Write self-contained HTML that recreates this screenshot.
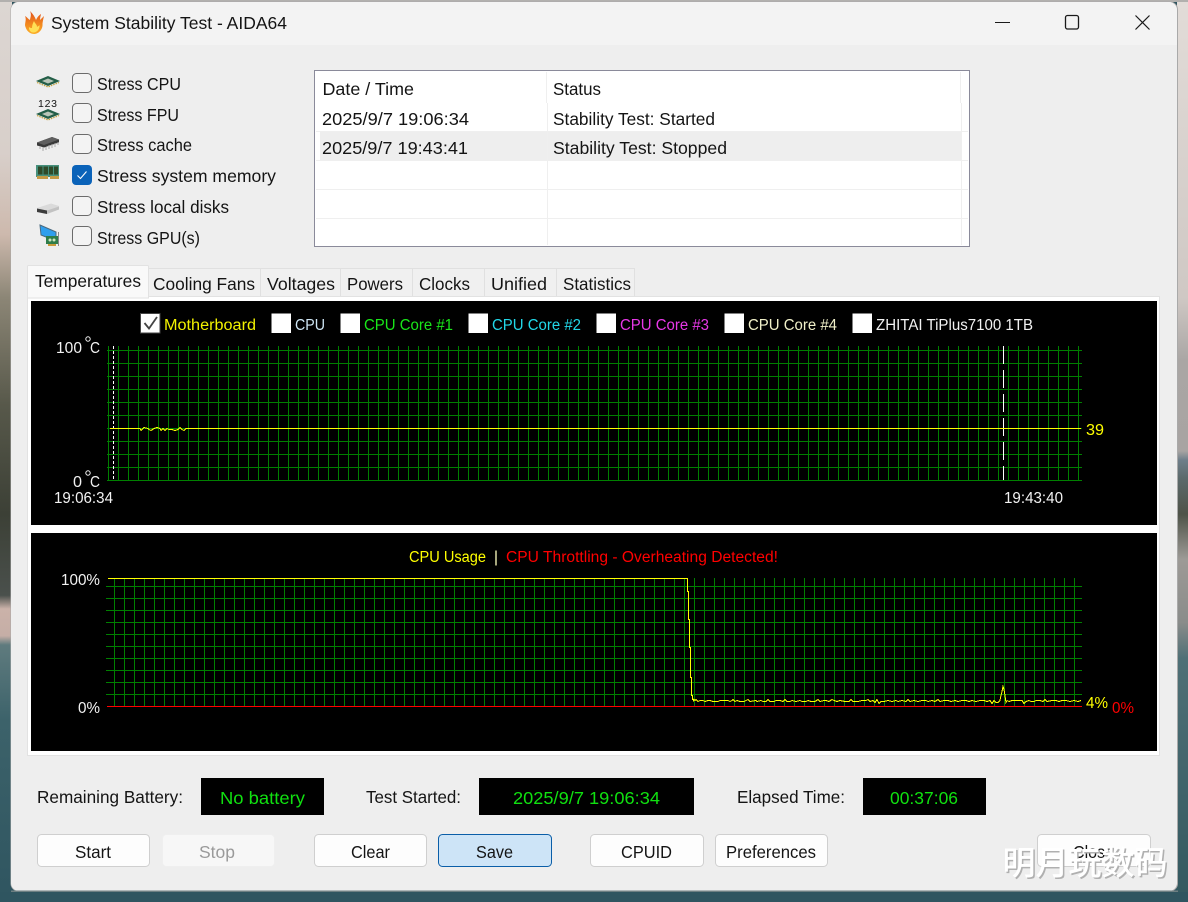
<!DOCTYPE html>
<html lang="en">
<head>
<meta charset="utf-8">
<title>System Stability Test - AIDA64</title>
<style>
html,body{margin:0;padding:0;width:1188px;height:902px;overflow:hidden;background:#2f5560}
svg{display:block}
text{font-family:"Liberation Sans","Noto Sans CJK SC",sans-serif;font-size:17.5px;fill:#141414;white-space:pre}
.c text,text.c{font-size:15.5px}
.wm{font-family:"Liberation Sans","Noto Sans CJK SC",sans-serif;font-size:33px;font-weight:500}
</style>
</head>
<body>
<svg width="1188" height="902" viewBox="0 0 1188 902" xmlns="http://www.w3.org/2000/svg">
<defs>
<linearGradient id="wl" x1="0" y1="0" x2="0" y2="1">
<stop offset="0" stop-color="#dcd6d2"/><stop offset=".17" stop-color="#d8cfca"/><stop offset=".26" stop-color="#cdb9ad"/><stop offset=".33" stop-color="#8c8676"/><stop offset=".45" stop-color="#57584a"/><stop offset=".57" stop-color="#3c4036"/><stop offset=".66" stop-color="#4a504c"/><stop offset=".675" stop-color="#cbb2a9"/><stop offset=".705" stop-color="#c5aea6"/><stop offset=".715" stop-color="#5f7b7e"/><stop offset=".8" stop-color="#3c626a"/><stop offset="1" stop-color="#2f5560"/>
</linearGradient>
<linearGradient id="wr" x1="0" y1="0" x2="0" y2="1">
<stop offset="0" stop-color="#e2dcd8"/><stop offset=".33" stop-color="#cfc8c4"/><stop offset=".4" stop-color="#aaa6a4"/><stop offset=".5" stop-color="#a8a4a2"/><stop offset=".51" stop-color="#6f7f8a"/><stop offset=".53" stop-color="#5c6a6c"/><stop offset=".57" stop-color="#4e5348"/><stop offset=".62" stop-color="#9d9a96"/><stop offset=".69" stop-color="#8a8c8a"/><stop offset=".73" stop-color="#4f7076"/><stop offset="1" stop-color="#33585f"/>
</linearGradient>
<pattern id="gv1" patternUnits="userSpaceOnUse" x="108" y="0" width="10" height="10"><rect width="1" height="10" fill="#008000"/></pattern>
<pattern id="gh1" patternUnits="userSpaceOnUse" x="0" y="350" width="10" height="13"><rect width="10" height="1" fill="#008000"/></pattern>
<pattern id="gv2" patternUnits="userSpaceOnUse" x="114" y="0" width="10" height="10"><rect width="1" height="10" fill="#008000"/></pattern>
<pattern id="gh2" patternUnits="userSpaceOnUse" x="0" y="586" width="10" height="12"><rect width="10" height="1" fill="#008000"/></pattern>
<linearGradient id="fl" x1="0" y1="0" x2="0" y2="1"><stop offset="0" stop-color="#e2521c"/><stop offset=".6" stop-color="#f28a1e"/><stop offset="1" stop-color="#fbb02a"/></linearGradient>
</defs>

<!-- wallpaper -->
<rect width="1188" height="902" fill="#2f5560"/>
<rect x="0" y="0" width="12" height="902" fill="url(#wl)"/>
<rect x="1177" y="0" width="11" height="902" fill="url(#wr)"/>
<rect x="0" y="892" width="1188" height="10" fill="#2f5560"/>
<rect x="0" y="0" width="1188" height="2" fill="#b2b0ae"/>

<!-- window -->
<rect x="10.500" y="1.500" width="1167.500" height="890" rx="8" fill="#a9a9a9"/>
<rect x="11" y="2" width="1166" height="889" rx="8" fill="#eeeeee"/>
<path d="M11 45V10a8 8 0 0 1 8-8H1169a8 8 0 0 1 8 8V45Z" fill="#f3f3f3"/>
<rect x="11" y="890.500" width="1167" height="1.500" fill="#6d7f82"/>

<!-- titlebar -->
<path d="M30 11C32 15 30 18 30 20 28 19 27 17 25 16 27 20 24 24 25.500 27 27 32 31 34 34 34 39 34 43 29 42.500 24 42.500 23 43 20 44 16 42 18 41 19 40 20 40 17 41 15 41 14 38 16 37 18 36 20 35 17 33 14 30 11Z" fill="url(#fl)"/>
<path d="M34 21C35 24 37 24 37 27 38 26 39 26 39.500 25 40 29 37 32.500 33.500 32.500 30.500 32.500 28.500 30 29 27 30 28 31 28 32 28 32 25 33 23 34 21Z" fill="#ffdf55"/>
<text x="51" y="29" textLength="236" lengthAdjust="spacingAndGlyphs" font-size="18">System Stability Test - AIDA64</text>
<rect x="995" y="22" width="15" height="1" fill="#1a1a1a"/>
<rect x="1065.500" y="15.500" width="13" height="13.500" rx="2" fill="none" stroke="#1a1a1a" stroke-width="1.300"/>
<path d="M1135.500 15.500 1149.500 29.500M1149.500 15.500 1135.500 29.500" stroke="#1a1a1a" stroke-width="1.200" fill="none"/>

<!-- stress icons -->
<g>
<path d="M36 81 48 76 60 81 48 86Z" fill="#245f48"/><path d="M42 81 48 78.500 54 81 48 83.500Z" fill="#b9c6b8"/><path d="M37 82.500 48 87 59 82.500" fill="none" stroke="#c2a03a" stroke-width="1.200" stroke-dasharray="1.500 1"/>
<text x="38" y="107" textLength="19" lengthAdjust="spacing" style="font-size:10.500px">123</text>
<path d="M36 114 48 109 60 114 48 119Z" fill="#245f48"/><path d="M42 114 48 111.500 54 114 48 116.500Z" fill="#b9c6b8"/><path d="M37 115.500 48 120 59 115.500" fill="none" stroke="#c2a03a" stroke-width="1.200" stroke-dasharray="1.500 1"/>
<path d="M37 142.500 52 137 59 139.500 59 142.500 44 147.500 37 145.500Z" fill="#3a3a3a"/><path d="M37 142.500 52 137 59 139.500 44 145Z" fill="#5f5f5f"/><path d="M40 146V149M43 147V151M46 147V150M49 145V149M52 144V148M55 143V147M58 142V145" stroke="#a8a8a8" stroke-width="1"/>
<rect x="36" y="165" width="23" height="12" fill="#46907c"/><rect x="38" y="166.500" width="4.500" height="8" fill="#2f4a2a"/><rect x="43.500" y="166.500" width="4.500" height="8" fill="#2f4a2a"/><rect x="49" y="166.500" width="4" height="8" fill="#2f4a2a"/><rect x="54" y="166.500" width="4" height="8" fill="#2f4a2a"/><rect x="37" y="176" width="11" height="3" fill="#c49a45"/><rect x="50" y="176" width="9" height="3" fill="#c49a45"/>
<path d="M37 208 51 203.500 59 206 59 209.500 46 214 37 212Z" fill="#dadada"/><path d="M37 208.500 47 210.500 47 214 37 212Z" fill="#3c3c3c"/><path d="M47 210.500 59 206.500 59 209.500 47 214Z" fill="#c2c2c2"/>
<path d="M40 225 56 232 56 241 41 235Z" fill="#2f9fee" stroke="#4a6a80" stroke-width="1"/>
<rect x="46" y="236" width="12" height="8" fill="#2f7d4a"/><circle cx="50" cy="240" r="1.500" fill="#cfe6c0"/><circle cx="54" cy="240" r="1.500" fill="#cfe6c0"/><rect x="48" y="244" width="8" height="2" fill="#c89a3a"/><rect x="58" y="232" width="1" height="14" fill="#888"/>
</g>

<!-- stress checkboxes -->
<g fill="#f3f3f3" stroke="#6b6b6b" stroke-width="1">
<rect x="72.500" y="73.500" width="19" height="19" rx="4"/>
<rect x="72.500" y="103.500" width="19" height="19" rx="4"/>
<rect x="72.500" y="134.500" width="19" height="19" rx="4"/>
<rect x="72.500" y="196.500" width="19" height="19" rx="4"/>
<rect x="72.500" y="226.500" width="19" height="19" rx="4"/>
</g>
<rect x="72" y="165" width="20" height="20" rx="4" fill="#0b63b9"/>
<path d="M77.500 175.500 80.500 178.500 86.500 171.500" fill="none" stroke="#fff" stroke-width="1.100"/>
<text x="97" y="90" textLength="84" lengthAdjust="spacingAndGlyphs">Stress CPU</text>
<text x="97" y="121" textLength="82" lengthAdjust="spacingAndGlyphs">Stress FPU</text>
<text x="97" y="151" textLength="95" lengthAdjust="spacingAndGlyphs">Stress cache</text>
<text x="97" y="182" textLength="179" lengthAdjust="spacingAndGlyphs">Stress system memory</text>
<text x="97" y="213" textLength="132" lengthAdjust="spacingAndGlyphs">Stress local disks</text>
<text x="97" y="244" textLength="103" lengthAdjust="spacingAndGlyphs">Stress GPU(s)</text>

<!-- log table -->
<rect x="314.500" y="70.500" width="655" height="176" fill="#fff" stroke="#8a8a9a" stroke-width="1"/>
<rect x="320" y="131" width="641" height="30" fill="#eeeeee"/>
<g fill="#efefef">
<rect x="546" y="72" width="1" height="31"/><rect x="960" y="72" width="1" height="31"/>
<rect x="547" y="103" width="1" height="142"/><rect x="961" y="103" width="1" height="142"/>
<rect x="316" y="131" width="652" height="1"/><rect x="316" y="160" width="652" height="1"/>
<rect x="316" y="189" width="652" height="1"/><rect x="316" y="218" width="652" height="1"/>
</g>
<text x="322.500" y="95" textLength="91.500" lengthAdjust="spacingAndGlyphs">Date / Time</text>
<text x="553" y="95" textLength="48" lengthAdjust="spacingAndGlyphs">Status</text>
<text x="322" y="125" textLength="147" lengthAdjust="spacingAndGlyphs">2025/9/7 19:06:34</text>
<text x="553" y="125" textLength="162" lengthAdjust="spacingAndGlyphs">Stability Test: Started</text>
<text x="322" y="154" textLength="146" lengthAdjust="spacingAndGlyphs">2025/9/7 19:43:41</text>
<text x="553" y="154" textLength="174" lengthAdjust="spacingAndGlyphs">Stability Test: Stopped</text>

<!-- tabs -->
<g fill="#f0f0f0" stroke="#e0e0e0" stroke-width="1">
<rect x="148.500" y="268.500" width="112" height="30"/>
<rect x="260.500" y="268.500" width="80" height="30"/>
<rect x="340.500" y="268.500" width="72" height="30"/>
<rect x="412.500" y="268.500" width="72" height="30"/>
<rect x="484.500" y="268.500" width="72" height="30"/>
<rect x="556.500" y="268.500" width="78" height="30"/>
</g>
<rect x="27.500" y="296.500" width="1132" height="459" fill="#ffffff" stroke="#e2e2e2" stroke-width="1"/>
<path d="M27.500 298V266.500a1 1 0 0 1 1-1H147.500a1 1 0 0 1 1 1V298Z" fill="#f9f9f9" stroke="#e2e2e2" stroke-width="1"/>
<text x="35" y="287" textLength="106" lengthAdjust="spacingAndGlyphs">Temperatures</text>
<text x="153" y="290" textLength="102" lengthAdjust="spacingAndGlyphs">Cooling Fans</text>
<text x="267" y="290" textLength="68" lengthAdjust="spacingAndGlyphs">Voltages</text>
<text x="347" y="290" textLength="56" lengthAdjust="spacingAndGlyphs">Powers</text>
<text x="419" y="290" textLength="51" lengthAdjust="spacingAndGlyphs">Clocks</text>
<text x="491" y="290" textLength="56" lengthAdjust="spacingAndGlyphs">Unified</text>
<text x="563" y="290" textLength="68" lengthAdjust="spacingAndGlyphs">Statistics</text>

<!-- temperature chart -->
<rect x="31" y="301" width="1126" height="224" fill="#000"/>
<rect x="108" y="346" width="971" height="135" fill="url(#gv1)"/>
<rect x="107" y="350" width="975" height="131" fill="url(#gh1)"/>
<g stroke="#fff" stroke-width="1" fill="none" shape-rendering="crispEdges">
<path d="M113.500 346V480" stroke-dasharray="3 2"/>
<path d="M1003.500 346V480" stroke-dasharray="18 6"/>
</g>
<polyline shape-rendering="crispEdges" fill="none" stroke="#ffff00" stroke-width="1" points="110,428.500 140,428.500 141,430.500 142,429.500 144,427.500 148,428.500 149,429.500 151,430.500 154,428.500 157,427.500 160,428.500 161,430.500 163,428.500 165,430.500 167,428.500 169,429.500 172,429.500 175,430.500 178,429.500 180,427.500 182,429.500 184,430.500 186,428.500 188,428.500 1081,428.500"/>

<g fill="#fff" stroke="#444" stroke-width="1">
<rect x="140.500" y="313.500" width="19.500" height="19.500"/>
<rect x="271.500" y="313.500" width="19.500" height="19.500" stroke="none"/>
<rect x="340.500" y="313.500" width="19.500" height="19.500" stroke="none"/>
<rect x="468.500" y="313.500" width="19.500" height="19.500" stroke="none"/>
<rect x="596.500" y="313.500" width="19.500" height="19.500" stroke="none"/>
<rect x="724.500" y="313.500" width="19.500" height="19.500" stroke="none"/>
<rect x="852.500" y="313.500" width="19.500" height="19.500" stroke="none"/>
</g>
<path d="M144.500 323 149 328.500 157 317" fill="none" stroke="#444" stroke-width="1.800"/>
<g class="c">
<text x="164" y="330" textLength="92" lengthAdjust="spacingAndGlyphs" style="fill:#f2f200">Motherboard</text>
<text x="295" y="330" textLength="30" lengthAdjust="spacingAndGlyphs" style="fill:#cfe6f5">CPU</text>
<text x="364" y="330" textLength="89" lengthAdjust="spacingAndGlyphs" style="fill:#19e619">CPU Core #1</text>
<text x="492" y="330" textLength="89" lengthAdjust="spacingAndGlyphs" style="fill:#22d8e8">CPU Core #2</text>
<text x="620" y="330" textLength="89" lengthAdjust="spacingAndGlyphs" style="fill:#e838e8">CPU Core #3</text>
<text x="748" y="330" textLength="89" lengthAdjust="spacingAndGlyphs" style="fill:#f0f0c8">CPU Core #4</text>
<text x="876" y="330" textLength="157" lengthAdjust="spacingAndGlyphs" style="fill:#f2f2f2">ZHITAI TiPlus7100 1TB</text>
<text x="56" y="353" textLength="26" lengthAdjust="spacingAndGlyphs" style="fill:#f2f2f2">100</text>
<text x="90" y="353" textLength="10" lengthAdjust="spacingAndGlyphs" style="fill:#f2f2f2">C</text>
<text x="73" y="487" textLength="9" lengthAdjust="spacingAndGlyphs" style="fill:#f2f2f2">0</text>
<text x="90" y="487" textLength="10" lengthAdjust="spacingAndGlyphs" style="fill:#f2f2f2">C</text>
<text x="54" y="503" textLength="59" lengthAdjust="spacingAndGlyphs" style="fill:#f2f2f2">19:06:34</text>
<text x="1004" y="503" textLength="59" lengthAdjust="spacingAndGlyphs" style="fill:#f2f2f2">19:43:40</text>
<text x="1086" y="435" textLength="18" lengthAdjust="spacingAndGlyphs" style="fill:#ffff00">39</text>
</g>
<circle cx="88" cy="339" r="2.200" fill="none" stroke="#f2f2f2" stroke-width="1"/>
<circle cx="88" cy="473" r="2.200" fill="none" stroke="#f2f2f2" stroke-width="1"/>

<!-- CPU usage chart -->
<rect x="31" y="533" width="1126" height="218" fill="#000"/>
<rect x="114" y="578" width="961" height="128" fill="url(#gv2)"/>
<rect x="106" y="586" width="976" height="120" fill="url(#gh2)"/>
<rect x="107" y="706" width="975" height="1" fill="#ff0000"/>
<polyline shape-rendering="crispEdges" fill="none" stroke="#ffff00" stroke-width="1" points="108,578.500 687.500,578.500 687.500,591.500 688.500,591.500 688.500,619.500 689.500,619.500 689.500,647.500 690.500,647.500 690.500,677.500 691.500,677.500 691.500,695.500 692.500,695.500 692.500,699.500 693.500,699.500 693.500,701.500 694,699.500 695,700.500 696,699.500 698,701.500 700,700.500 703,700.500 705,701.500 708,700.500 710,700.500 713,701.500 718,701.500 720,700.500 728,700.500 730,701.500 732,700.500 733,699.500 735,701.500 737,700.500 740,701.500 744,701.500 746,700.500 748,699.500 750,701.500 756,700.500 757,701.500 761,700.500 763,701.500 766,701.500 768,699.500 770,701.500 774,701.500 776,700.500 780,700.500 783,701.500 785,699.500 787,701.500 790,701.500 792,700.500 796,701.500 800,700.500 802,701.500 806,701.500 808,700.500 811,701.500 815,701.500 818,699.500 820,701.500 824,700.500 826,700.500 829,701.500 832,699.500 834,700.500 837,701.500 840,700.500 845,701.500 849,701.500 851,699.500 853,701.500 858,701.500 862,700.500 866,700.500 868,699.500 870,701.500 873,700.500 875,702.500 877,699.500 879,703.500 881,701.500 884,701.500 888,700.500 892,701.500 896,700.500 898,701.500 902,700.500 906,701.500 908,699.500 910,701.500 914,700.500 918,701.500 922,700.500 926,700.500 928,701.500 932,700.500 935,701.500 938,699.500 940,701.500 944,700.500 948,700.500 951,701.500 955,700.500 958,701.500 962,700.500 966,700.500 969,701.500 972,700.500 976,701.500 980,700.500 984,700.500 987,701.500 990,700.500 992,703.500 994,700.500 996,702.500 998,702.500 1000,700.500 1001,695.500 1002,691.500 1003,686.500 1004,689.500 1005,695.500 1006,702.500 1007,700.500 1009,701.500 1012,700.500 1022,700.500 1024,703.500 1026,701.500 1029,700.500 1031,701.500 1034,701.500 1036,700.500 1040,700.500 1043,701.500 1045,699.500 1047,701.500 1052,700.500 1056,700.500 1059,701.500 1062,700.500 1066,700.500 1070,701.500 1074,700.500 1078,701.500 1081,700.500"/>
<g class="c">
<text x="409" y="562" textLength="77" lengthAdjust="spacingAndGlyphs" style="fill:#ffff00">CPU Usage</text>
<text x="494" y="562" textLength="4" lengthAdjust="spacingAndGlyphs" style="fill:#ffffc0">|</text>
<text x="506" y="562" textLength="272" lengthAdjust="spacingAndGlyphs" style="fill:#ff0000">CPU Throttling - Overheating Detected!</text>
<text x="61" y="585" textLength="39" lengthAdjust="spacingAndGlyphs" style="fill:#f2f2f2">100%</text>
<text x="78" y="713" textLength="22" lengthAdjust="spacingAndGlyphs" style="fill:#f2f2f2">0%</text>
<text x="1086" y="708" textLength="22" lengthAdjust="spacingAndGlyphs" style="fill:#ffff00">4%</text>
<text x="1112" y="713" textLength="22" lengthAdjust="spacingAndGlyphs" style="fill:#ff0000">0%</text>
</g>

<!-- status row -->
<text x="37" y="803" textLength="146" lengthAdjust="spacingAndGlyphs">Remaining Battery:</text>
<rect x="201" y="778" width="123" height="37" fill="#000"/>
<text x="220" y="804" textLength="85" lengthAdjust="spacingAndGlyphs" style="fill:#10e010">No battery</text>
<text x="366" y="803" textLength="95" lengthAdjust="spacingAndGlyphs">Test Started:</text>
<rect x="479" y="778" width="215" height="37" fill="#000"/>
<text x="513" y="804" textLength="147" lengthAdjust="spacingAndGlyphs" style="fill:#10e010">2025/9/7 19:06:34</text>
<text x="737" y="803" textLength="108" lengthAdjust="spacingAndGlyphs">Elapsed Time:</text>
<rect x="863" y="778" width="123" height="37" fill="#000"/>
<text x="890" y="804" textLength="68" lengthAdjust="spacingAndGlyphs" style="fill:#10e010">00:37:06</text>

<!-- buttons -->
<g fill="#fdfdfd" stroke="#cfcfcf" stroke-width="1">
<rect x="37.500" y="834.500" width="112" height="32" rx="4"/>
<rect x="314.500" y="834.500" width="112" height="32" rx="4"/>
<rect x="590.500" y="834.500" width="113" height="32" rx="4"/>
<rect x="715.500" y="834.500" width="112" height="32" rx="4"/>
<rect x="1037.500" y="834.500" width="113" height="32" rx="4"/>
</g>
<rect x="162.500" y="834.500" width="112" height="32" rx="4" fill="#f7f7f7" stroke="#efefef"/>
<rect x="438.500" y="834.500" width="113" height="32" rx="4" fill="#cde4f7" stroke="#0a5ea8"/>
<text x="75" y="858" textLength="36" lengthAdjust="spacingAndGlyphs">Start</text>
<text x="199" y="858" textLength="36" lengthAdjust="spacingAndGlyphs" style="fill:#9a9a9a">Stop</text>
<text x="351" y="858" textLength="39" lengthAdjust="spacingAndGlyphs">Clear</text>
<text x="476" y="858" textLength="37" lengthAdjust="spacingAndGlyphs">Save</text>
<text x="621" y="858" textLength="51" lengthAdjust="spacingAndGlyphs">CPUID</text>
<text x="726" y="858" textLength="90" lengthAdjust="spacingAndGlyphs">Preferences</text>
<text x="1073" y="858" textLength="41" lengthAdjust="spacingAndGlyphs">Close</text>

<!-- watermark -->
<text class="wm" x="1004" y="876" textLength="165" style="font-size:33px;fill:#b0b0b0">明月玩数码</text>
<text class="wm" x="1002.500" y="874.500" textLength="165" style="font-size:33px;fill:#ffffff">明月玩数码</text>
</svg>
</body>
</html>
